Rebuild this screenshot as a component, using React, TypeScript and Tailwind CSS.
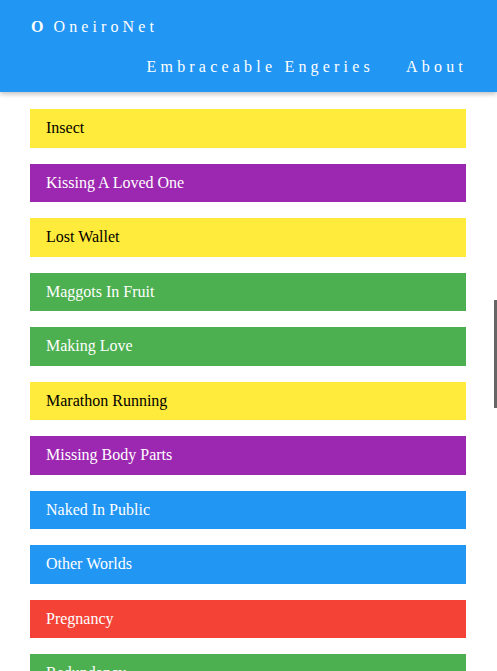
import React from "react";

const items: { label: string; color: string }[] = [
  { label: "Insect", color: "yellow" },
  { label: "Kissing A Loved One", color: "purple" },
  { label: "Lost Wallet", color: "yellow" },
  { label: "Maggots In Fruit", color: "green" },
  { label: "Making Love", color: "green" },
  { label: "Marathon Running", color: "yellow" },
  { label: "Missing Body Parts", color: "purple" },
  { label: "Naked In Public", color: "blue" },
  { label: "Other Worlds", color: "blue" },
  { label: "Pregnancy", color: "red" },
  { label: "Redundancy", color: "green" },
];

const colorClass: Record<string, string> = {
  yellow: "bg-[#ffeb3b] text-black",
  purple: "bg-[#9c27b0] text-white",
  green: "bg-[#4caf50] text-white",
  blue: "bg-[#2196f3] text-white",
  red: "bg-[#f44336] text-white",
};

export default function App() {
  return (
    <div
      className="relative h-[671px] overflow-hidden bg-white"
      style={{ fontFamily: "'Liberation Serif', serif" }}
    >
      <header className="relative z-10 h-[92px] bg-[#2196f3] text-white shadow-[0_2px_5px_rgba(0,0,0,0.26)]">
        <div className="flex h-[54px] items-center pl-[31px] text-[16px] tracking-[4.1px]">
          <span className="font-bold">O</span>
          <span className="ml-[6px]">OneiroNet</span>
        </div>
        <nav className="flex justify-end gap-[32px] pr-[30px] pt-[1px] text-[16px] tracking-[4.2px]">
          <span>Embraceable Engeries</span>
          <span>About</span>
        </nav>
      </header>
      <div className="flex flex-col gap-[16px] pl-[30px] pr-[31px] pt-[17px]">
        {items.map((it) => (
          <div
            key={it.label}
            className={`flex h-[38.5px] shrink-0 items-center pl-[16px] text-[16px] ${colorClass[it.color]}`}
          >
            {it.label}
          </div>
        ))}
      </div>
      <div className="absolute right-0 top-[300px] h-[108px] w-[3px] bg-[#666]" />
    </div>
  );
}
